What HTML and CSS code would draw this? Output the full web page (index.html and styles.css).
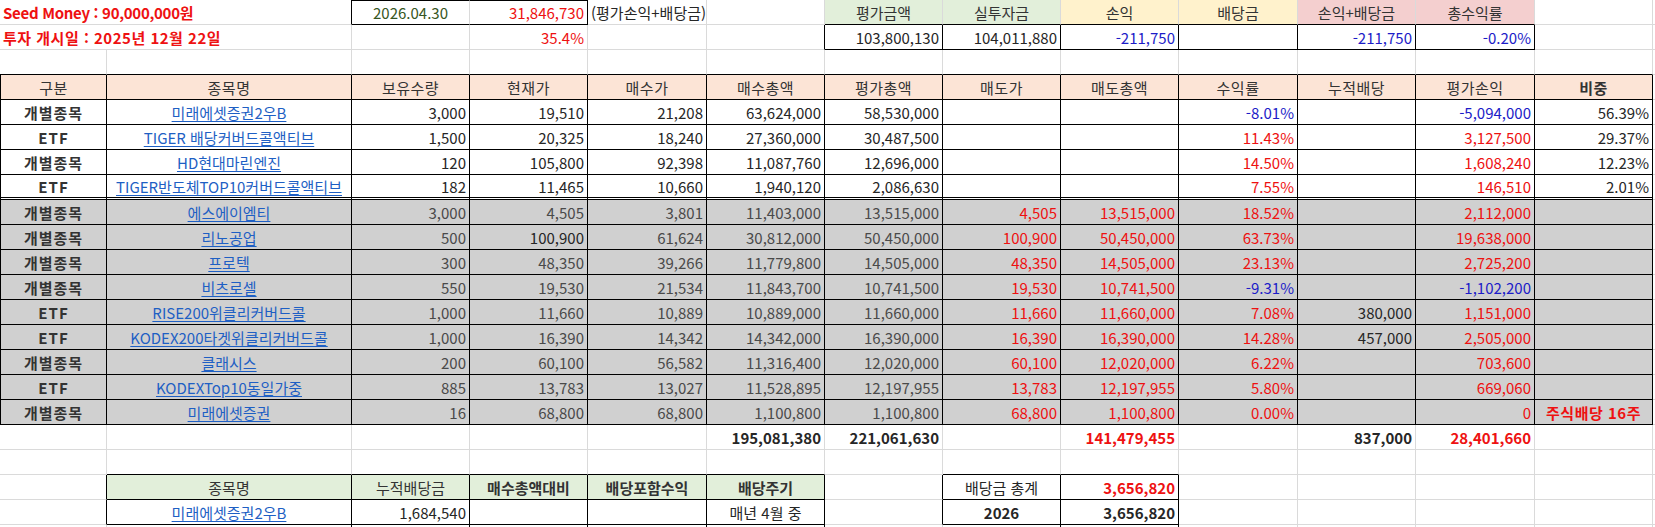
FILE: index.html
```html
<!DOCTYPE html>
<html lang="ko">
<head>
<meta charset="utf-8">
<title>투자 현황</title>
<link rel="stylesheet" href="styles.css">
</head>
<body>
<div class="sheet">
  <!-- row 1 -->
  <div class="c s2 l red b tight bR">Seed Money : 90,000,000원</div>
  <div class="c ctr green bT bB">2026.04.30</div>
  <div class="c r red bT bB bR">31,846,730</div>
  <div class="c l">(평가손익+배당금)</div>
  <div class="c"></div>
  <div class="c ctr gn bB">평가금액</div>
  <div class="c ctr gn bB">실투자금</div>
  <div class="c ctr yl bB">손익</div>
  <div class="c ctr yl bB">배당금</div>
  <div class="c ctr pk bB">손익+배당금</div>
  <div class="c ctr pk bB">총수익률</div>
  <div class="c"></div>
  <div class="c"></div>

  <!-- row 2 -->
  <div class="c s2 l red b wide">투자 개시일 : 2025년 12월 22일</div>
  <div class="c"></div>
  <div class="c r red">35.4%</div>
  <div class="c"></div>
  <div class="c bR"></div>
  <div class="c r bR bB">103,800,130</div>
  <div class="c r bR bB">104,011,880</div>
  <div class="c r blue bR bB">-211,750</div>
  <div class="c bR bB"></div>
  <div class="c r blue bR bB">-211,750</div>
  <div class="c r blue bR bB">-0.20%</div>
  <div class="c"></div>
  <div class="c"></div>

  <!-- row 3 -->
  <div class="c bB"></div><div class="c bB"></div><div class="c bB"></div><div class="c bB"></div>
  <div class="c bB"></div><div class="c bB"></div><div class="c bB"></div><div class="c bB"></div>
  <div class="c bB"></div><div class="c bB"></div><div class="c bB"></div><div class="c bB"></div>
  <div class="c bB"></div><div class="c"></div>

  <!-- row 4 : header -->
  <div class="c ctr hd bL bR bB">구분</div>
  <div class="c ctr hd bR bB">종목명</div>
  <div class="c ctr hd bR bB">보유수량</div>
  <div class="c ctr hd bR bB">현재가</div>
  <div class="c ctr hd bR bB">매수가</div>
  <div class="c ctr hd bR bB">매수총액</div>
  <div class="c ctr hd bR bB">평가총액</div>
  <div class="c ctr hd bR bB">매도가</div>
  <div class="c ctr hd bR bB">매도총액</div>
  <div class="c ctr hd bR bB">수익률</div>
  <div class="c ctr hd bR bB">누적배당</div>
  <div class="c ctr hd bR bB">평가손익</div>
  <div class="c ctr hd b bR bB">비중</div>
  <div class="c"></div>

  <!-- row 5 -->
  <div class="c ctr kind bL bR bB">개별종목</div>
  <div class="c ctr bR bB"><a class="lnk">미래에셋증권2우B</a></div>
  <div class="c r num bR bB">3,000</div>
  <div class="c r num bR bB">19,510</div>
  <div class="c r num bR bB">21,208</div>
  <div class="c r num bR bB">63,624,000</div>
  <div class="c r num bR bB">58,530,000</div>
  <div class="c bR bB"></div>
  <div class="c bR bB"></div>
  <div class="c r blue bR bB">-8.01%</div>
  <div class="c bR bB"></div>
  <div class="c r blue bR bB">-5,094,000</div>
  <div class="c r num bR bB">56.39%</div>
  <div class="c"></div>

  <!-- row 6 -->
  <div class="c ctr kind bL bR bB">ETF</div>
  <div class="c ctr bR bB"><a class="lnk">TIGER 배당커버드콜액티브</a></div>
  <div class="c r num bR bB">1,500</div>
  <div class="c r num bR bB">20,325</div>
  <div class="c r num bR bB">18,240</div>
  <div class="c r num bR bB">27,360,000</div>
  <div class="c r num bR bB">30,487,500</div>
  <div class="c bR bB"></div>
  <div class="c bR bB"></div>
  <div class="c r red bR bB">11.43%</div>
  <div class="c bR bB"></div>
  <div class="c r red bR bB">3,127,500</div>
  <div class="c r num bR bB">29.37%</div>
  <div class="c"></div>

  <!-- row 7 -->
  <div class="c ctr kind bL bR bB">개별종목</div>
  <div class="c ctr bR bB"><a class="lnk">HD현대마린엔진</a></div>
  <div class="c r num bR bB">120</div>
  <div class="c r num bR bB">105,800</div>
  <div class="c r num bR bB">92,398</div>
  <div class="c r num bR bB">11,087,760</div>
  <div class="c r num bR bB">12,696,000</div>
  <div class="c bR bB"></div>
  <div class="c bR bB"></div>
  <div class="c r red bR bB">14.50%</div>
  <div class="c bR bB"></div>
  <div class="c r red bR bB">1,608,240</div>
  <div class="c r num bR bB">12.23%</div>
  <div class="c"></div>

  <!-- row 8 -->
  <div class="c ctr kind bL bR dbl">ETF</div>
  <div class="c ctr bR dbl"><a class="lnk">TIGER반도체TOP10커버드콜액티브</a></div>
  <div class="c r num bR dbl">182</div>
  <div class="c r num bR dbl">11,465</div>
  <div class="c r num bR dbl">10,660</div>
  <div class="c r num bR dbl">1,940,120</div>
  <div class="c r num bR dbl">2,086,630</div>
  <div class="c bR dbl"></div>
  <div class="c bR dbl"></div>
  <div class="c r red bR dbl">7.55%</div>
  <div class="c bR dbl"></div>
  <div class="c r red bR dbl">146,510</div>
  <div class="c r num bR dbl">2.01%</div>
  <div class="c"></div>

  <!-- row 9 -->
  <div class="c ctr kind gr bL bR bB">개별종목</div>
  <div class="c ctr gr bR bB"><a class="lnk">에스에이엠티</a></div>
  <div class="c r gnum gr bR bB">3,000</div>
  <div class="c r gnum gr bR bB">4,505</div>
  <div class="c r gnum gr bR bB">3,801</div>
  <div class="c r gnum gr bR bB">11,403,000</div>
  <div class="c r gnum gr bR bB">13,515,000</div>
  <div class="c r red gr bR bB">4,505</div>
  <div class="c r red gr bR bB">13,515,000</div>
  <div class="c r red gr bR bB">18.52%</div>
  <div class="c gr bR bB"></div>
  <div class="c r red gr bR bB">2,112,000</div>
  <div class="c gr bR bB"></div>
  <div class="c"></div>

  <!-- row 10 -->
  <div class="c ctr kind gr bL bR bB">개별종목</div>
  <div class="c ctr gr bR bB"><a class="lnk">리노공업</a></div>
  <div class="c r gnum gr bR bB">500</div>
  <div class="c r num gr bR bB">100,900</div>
  <div class="c r gnum gr bR bB">61,624</div>
  <div class="c r gnum gr bR bB">30,812,000</div>
  <div class="c r gnum gr bR bB">50,450,000</div>
  <div class="c r red gr bR bB">100,900</div>
  <div class="c r red gr bR bB">50,450,000</div>
  <div class="c r red gr bR bB">63.73%</div>
  <div class="c gr bR bB"></div>
  <div class="c r red gr bR bB">19,638,000</div>
  <div class="c gr bR bB"></div>
  <div class="c"></div>

  <!-- row 11 -->
  <div class="c ctr kind gr bL bR bB">개별종목</div>
  <div class="c ctr gr bR bB"><a class="lnk">프로텍</a></div>
  <div class="c r gnum gr bR bB">300</div>
  <div class="c r gnum gr bR bB">48,350</div>
  <div class="c r gnum gr bR bB">39,266</div>
  <div class="c r gnum gr bR bB">11,779,800</div>
  <div class="c r gnum gr bR bB">14,505,000</div>
  <div class="c r red gr bR bB">48,350</div>
  <div class="c r red gr bR bB">14,505,000</div>
  <div class="c r red gr bR bB">23.13%</div>
  <div class="c gr bR bB"></div>
  <div class="c r red gr bR bB">2,725,200</div>
  <div class="c gr bR bB"></div>
  <div class="c"></div>

  <!-- row 12 -->
  <div class="c ctr kind gr bL bR bB">개별종목</div>
  <div class="c ctr gr bR bB"><a class="lnk">비츠로셀</a></div>
  <div class="c r gnum gr bR bB">550</div>
  <div class="c r gnum gr bR bB">19,530</div>
  <div class="c r gnum gr bR bB">21,534</div>
  <div class="c r gnum gr bR bB">11,843,700</div>
  <div class="c r gnum gr bR bB">10,741,500</div>
  <div class="c r red gr bR bB">19,530</div>
  <div class="c r red gr bR bB">10,741,500</div>
  <div class="c r blue gr bR bB">-9.31%</div>
  <div class="c gr bR bB"></div>
  <div class="c r blue gr bR bB">-1,102,200</div>
  <div class="c gr bR bB"></div>
  <div class="c"></div>

  <!-- row 13 -->
  <div class="c ctr kind gr bL bR bB">ETF</div>
  <div class="c ctr gr bR bB"><a class="lnk">RISE200위클리커버드콜</a></div>
  <div class="c r gnum gr bR bB">1,000</div>
  <div class="c r gnum gr bR bB">11,660</div>
  <div class="c r gnum gr bR bB">10,889</div>
  <div class="c r gnum gr bR bB">10,889,000</div>
  <div class="c r gnum gr bR bB">11,660,000</div>
  <div class="c r red gr bR bB">11,660</div>
  <div class="c r red gr bR bB">11,660,000</div>
  <div class="c r red gr bR bB">7.08%</div>
  <div class="c r num gr bR bB">380,000</div>
  <div class="c r red gr bR bB">1,151,000</div>
  <div class="c gr bR bB"></div>
  <div class="c"></div>

  <!-- row 14 -->
  <div class="c ctr kind gr bL bR bB">ETF</div>
  <div class="c ctr gr bR bB"><a class="lnk">KODEX200타겟위클리커버드콜</a></div>
  <div class="c r gnum gr bR bB">1,000</div>
  <div class="c r gnum gr bR bB">16,390</div>
  <div class="c r gnum gr bR bB">14,342</div>
  <div class="c r gnum gr bR bB">14,342,000</div>
  <div class="c r gnum gr bR bB">16,390,000</div>
  <div class="c r red gr bR bB">16,390</div>
  <div class="c r red gr bR bB">16,390,000</div>
  <div class="c r red gr bR bB">14.28%</div>
  <div class="c r num gr bR bB">457,000</div>
  <div class="c r red gr bR bB">2,505,000</div>
  <div class="c gr bR bB"></div>
  <div class="c"></div>

  <!-- row 15 -->
  <div class="c ctr kind gr bL bR bB">개별종목</div>
  <div class="c ctr gr bR bB"><a class="lnk">클래시스</a></div>
  <div class="c r gnum gr bR bB">200</div>
  <div class="c r gnum gr bR bB">60,100</div>
  <div class="c r gnum gr bR bB">56,582</div>
  <div class="c r gnum gr bR bB">11,316,400</div>
  <div class="c r gnum gr bR bB">12,020,000</div>
  <div class="c r red gr bR bB">60,100</div>
  <div class="c r red gr bR bB">12,020,000</div>
  <div class="c r red gr bR bB">6.22%</div>
  <div class="c gr bR bB"></div>
  <div class="c r red gr bR bB">703,600</div>
  <div class="c gr bR bB"></div>
  <div class="c"></div>

  <!-- row 16 -->
  <div class="c ctr kind gr bL bR bB">ETF</div>
  <div class="c ctr gr bR bB"><a class="lnk">KODEXTop10동일가중</a></div>
  <div class="c r gnum gr bR bB">885</div>
  <div class="c r gnum gr bR bB">13,783</div>
  <div class="c r gnum gr bR bB">13,027</div>
  <div class="c r gnum gr bR bB">11,528,895</div>
  <div class="c r gnum gr bR bB">12,197,955</div>
  <div class="c r red gr bR bB">13,783</div>
  <div class="c r red gr bR bB">12,197,955</div>
  <div class="c r red gr bR bB">5.80%</div>
  <div class="c gr bR bB"></div>
  <div class="c r red gr bR bB">669,060</div>
  <div class="c gr bR bB"></div>
  <div class="c"></div>

  <!-- row 17 -->
  <div class="c ctr kind gr bL bR bB">개별종목</div>
  <div class="c ctr gr bR bB"><a class="lnk">미래에셋증권</a></div>
  <div class="c r gnum gr bR bB">16</div>
  <div class="c r gnum gr bR bB">68,800</div>
  <div class="c r gnum gr bR bB">68,800</div>
  <div class="c r gnum gr bR bB">1,100,800</div>
  <div class="c r gnum gr bR bB">1,100,800</div>
  <div class="c r red gr bR bB">68,800</div>
  <div class="c r red gr bR bB">1,100,800</div>
  <div class="c r red gr bR bB">0.00%</div>
  <div class="c gr bR bB"></div>
  <div class="c r red gr bR bB">0</div>
  <div class="c ctr red b wide gr bR bB">주식배당 16주</div>
  <div class="c"></div>

  <!-- row 18 : totals -->
  <div class="c"></div><div class="c"></div><div class="c"></div><div class="c"></div><div class="c"></div>
  <div class="c r num b">195,081,380</div>
  <div class="c r num b">221,061,630</div>
  <div class="c"></div>
  <div class="c r red b">141,479,455</div>
  <div class="c"></div>
  <div class="c r num b">837,000</div>
  <div class="c r red b">28,401,660</div>
  <div class="c"></div><div class="c"></div>

  <!-- row 19 -->
  <div class="c"></div>
  <div class="c bB"></div><div class="c bB"></div><div class="c bB"></div><div class="c bB"></div><div class="c bB"></div>
  <div class="c"></div>
  <div class="c bB"></div><div class="c bB"></div>
  <div class="c"></div><div class="c"></div><div class="c"></div><div class="c"></div><div class="c"></div>

  <!-- row 20 : dividend table header -->
  <div class="c bR"></div>
  <div class="c ctr gn bR bB">종목명</div>
  <div class="c ctr gn bR bB">누적배당금</div>
  <div class="c ctr gn b bR bB">매수총액대비</div>
  <div class="c ctr gn b bR bB">배당포함수익</div>
  <div class="c ctr gn b bR bB">배당주기</div>
  <div class="c bR"></div>
  <div class="c ctr bR bB">배당금 총계</div>
  <div class="c r red b bR bB">3,656,820</div>
  <div class="c"></div><div class="c"></div><div class="c"></div><div class="c"></div><div class="c"></div>

  <!-- row 21 -->
  <div class="c bR"></div>
  <div class="c ctr bR bB"><a class="lnk">미래에셋증권2우B</a></div>
  <div class="c r num bR bB">1,684,540</div>
  <div class="c bR bB"></div>
  <div class="c bR bB"></div>
  <div class="c ctr num bR bB">매년 4월 중</div>
  <div class="c bR"></div>
  <div class="c ctr num b bR bB">2026</div>
  <div class="c r num b bR bB">3,656,820</div>
  <div class="c"></div><div class="c"></div><div class="c"></div><div class="c"></div><div class="c"></div>

  <!-- row 22 (partial) -->
  <div class="c"></div><div class="c bR"></div><div class="c bR"></div><div class="c bR"></div><div class="c bR"></div>
  <div class="c bR"></div><div class="c"></div><div class="c bR"></div><div class="c bR"></div><div class="c"></div>
  <div class="c"></div><div class="c"></div><div class="c"></div><div class="c"></div>
</div>
</body>
</html>
```
FILE: styles.css
```css
html, body {
  margin: 0;
  padding: 0;
  background: #ffffff;
  overflow: hidden;
}

.sheet {
  display: grid;
  grid-template-columns: 107px 245px 118px 118px 119px 118px 118px 118px 118px 119px 118px 119px 118px 1fr;
  grid-auto-rows: 25px;
  width: 1655px;
  font-family: "Noto Sans CJK KR", "Noto Sans", sans-serif;
  font-size: 15px;
  color: #262626;
}

.c {
  box-sizing: border-box;
  display: flex;
  align-items: center;
  min-width: 0;
  overflow: hidden;
  white-space: nowrap;
  border-right: 1px solid #dadada;
  border-bottom: 1px solid #dadada;
  padding: 0 3px;
  line-height: 1;
}

.s2 { grid-column: span 2; }

.l { justify-content: flex-start; }
.r { justify-content: flex-end; }
.ctr { justify-content: center; }

.b { font-weight: 700; }
.tight { letter-spacing: -0.3px; }
.wide { letter-spacing: 0.5px; }

.bR { border-right-color: #000; }
.bB { border-bottom-color: #000; }
.bL { border-left: 1px solid #000; }
.bT { border-top: 1px solid #000; }
.dbl { border-bottom: 3px double #000; }

.red { color: #ee1111; }
.blue { color: #1c1cc8; }
.green { color: #375623; }
.num { color: #262626; }
.gnum { color: #4a4a4a; }
.kind { font-weight: 700; color: #333333; letter-spacing: 1px; }

.hd { background: #fce4d6; color: #333333; letter-spacing: 0.5px; }
.gr { background: #d0d0d0; }
.gn { background: #e2efda; color: #333333; }
.yl { background: #fff2cc; color: #333333; }
.pk { background: #f4cfcf; color: #333333; }

.lnk {
  color: #1e5fc4;
  text-decoration: underline;
  text-underline-offset: 2px;
}
```
